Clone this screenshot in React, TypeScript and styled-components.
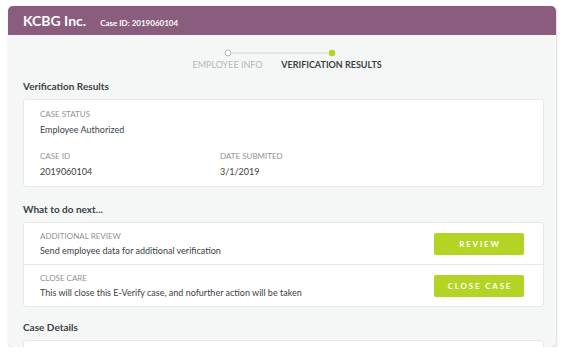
import styled, { createGlobalStyle } from "styled-components";

const GlobalStyle = createGlobalStyle`
  body {
    margin: 0;
    background: #ffffff;
    font-family: Lato, "Open Sans", sans-serif;
    -webkit-font-smoothing: antialiased;
  }
`;

const Page = styled.div`
  padding: 6px 0 0 8px;
`;

const Card = styled.div`
  width: 548px;
  height: 341px;
  border-radius: 5px;
  overflow: hidden;
  background: #f5f6f6;
  box-shadow: 1px 2px 3px rgba(0, 0, 0, 0.14), 0 0 1px rgba(0, 0, 0, 0.12);
`;

const Header = styled.header`
  display: flex;
  align-items: baseline;
  gap: 14px;
  height: 29px;
  padding: 0 15px;
  background: #8a5c7d;
  color: #ffffff;
`;

const Company = styled.h1`
  margin: 0;
  font-size: 14px;
  line-height: 29px;
  font-weight: 700;
`;

const CaseRef = styled.span`
  font-size: 8px;
  font-weight: 700;
`;

const Body = styled.div`
  padding: 0 12px 0 15px;
`;

const Stepper = styled.div`
  display: flex;
  flex-direction: column;
  align-items: center;
  padding-top: 14px;
  margin-right: 8px;
`;

const StepLabels = styled.div`
  display: flex;
  margin-top: 2px;
`;

const StepLabel = styled.span<{ $active?: boolean }>`
  width: 104px;
  text-align: center;
  font-size: 9px;
  line-height: 12px;
  text-transform: uppercase;
  white-space: nowrap;
  color: ${(p) => (p.$active ? "#3c4245" : "#b3b8ba")};
  font-weight: ${(p) => (p.$active ? 700 : 400)};
`;

const SectionTitle = styled.h2<{ $gap: number }>`
  margin: ${(p) => p.$gap}px 0 6px;
  font-size: 10px;
  line-height: 14px;
  font-weight: 700;
  color: #3c4245;
`;

const Panel = styled.div`
  background: #ffffff;
  border: 1px solid #e6e8e9;
  border-radius: 3px;
`;

const InfoGrid = styled.div`
  display: grid;
  grid-template-columns: 180px 1fr;
  row-gap: 15px;
  padding: 9px 16px 8px 16px;
`;

const Field = styled.div<{ $full?: boolean }>`
  grid-column: ${(p) => (p.$full ? "1 / -1" : "auto")};
  display: flex;
  flex-direction: column;
  gap: 4px;
`;

const Label = styled.span`
  font-size: 8px;
  line-height: 11px;
  text-transform: uppercase;
  color: #8e9396;
`;

const Value = styled.span`
  font-size: 9px;
  line-height: 12px;
  color: #3c4245;
`;

const ActionRow = styled.div`
  display: flex;
  align-items: center;
  justify-content: space-between;
  height: 41px;
  padding: 0 19px 0 16px;
  & + & {
    border-top: 1px solid #e6e8e9;
  }
`;

const ActionText = styled.div`
  display: flex;
  flex-direction: column;
  gap: 3px;
`;

const Button = styled.button`
  width: 90px;
  height: 22px;
  padding: 0 0 0 2px;
  border: none;
  border-radius: 2px;
  background: #b3d424;
  color: #ffffff;
  font-family: Lato, sans-serif;
  font-size: 8px;
  font-weight: 700;
  letter-spacing: 1.8px;
  cursor: pointer;
`;

const actions = [
  {
    label: "Additional Review",
    text: "Send employee data for additional verification",
    button: "REVIEW",
  },
  {
    label: "Close Care",
    text: "This will close this E-Verify case, and nofurther action will be taken",
    button: "CLOSE CASE",
  },
];

export default function App() {
  return (
    <Page>
      <GlobalStyle />
      <Card>
        <Header>
          <Company>KCBG Inc.</Company>
          <CaseRef>Case ID: 2019060104</CaseRef>
        </Header>
        <Body>
          <Stepper>
            <svg width="208" height="8" viewBox="0 0 208 8">
              <line x1="56" y1="4" x2="152" y2="4" stroke="#c9cccd" strokeWidth="1" strokeDasharray="1.5 0.5" />
              <circle cx="52" cy="4" r="3" fill="#ffffff" stroke="#b3b8ba" strokeWidth="1" />
              <circle cx="156" cy="4" r="3.3" fill="#b3d424" />
            </svg>
            <StepLabels>
              <StepLabel>Employee Info</StepLabel>
              <StepLabel $active>Verification Results</StepLabel>
            </StepLabels>
          </Stepper>

          <SectionTitle $gap={8}>Verification Results</SectionTitle>
          <Panel>
            <InfoGrid>
              <Field $full>
                <Label>Case Status</Label>
                <Value>Employee Authorized</Value>
              </Field>
              <Field>
                <Label>Case ID</Label>
                <Value>2019060104</Value>
              </Field>
              <Field>
                <Label>Date Submited</Label>
                <Value>3/1/2019</Value>
              </Field>
            </InfoGrid>
          </Panel>

          <SectionTitle $gap={15}>What to do next...</SectionTitle>
          <Panel>
            {actions.map((a) => (
              <ActionRow key={a.label}>
                <ActionText>
                  <Label>{a.label}</Label>
                  <Value>{a.text}</Value>
                </ActionText>
                <Button>{a.button}</Button>
              </ActionRow>
            ))}
          </Panel>

          <SectionTitle $gap={13}>Case Details</SectionTitle>
          <Panel style={{ height: 40 }} />
        </Body>
      </Card>
    </Page>
  );
}
